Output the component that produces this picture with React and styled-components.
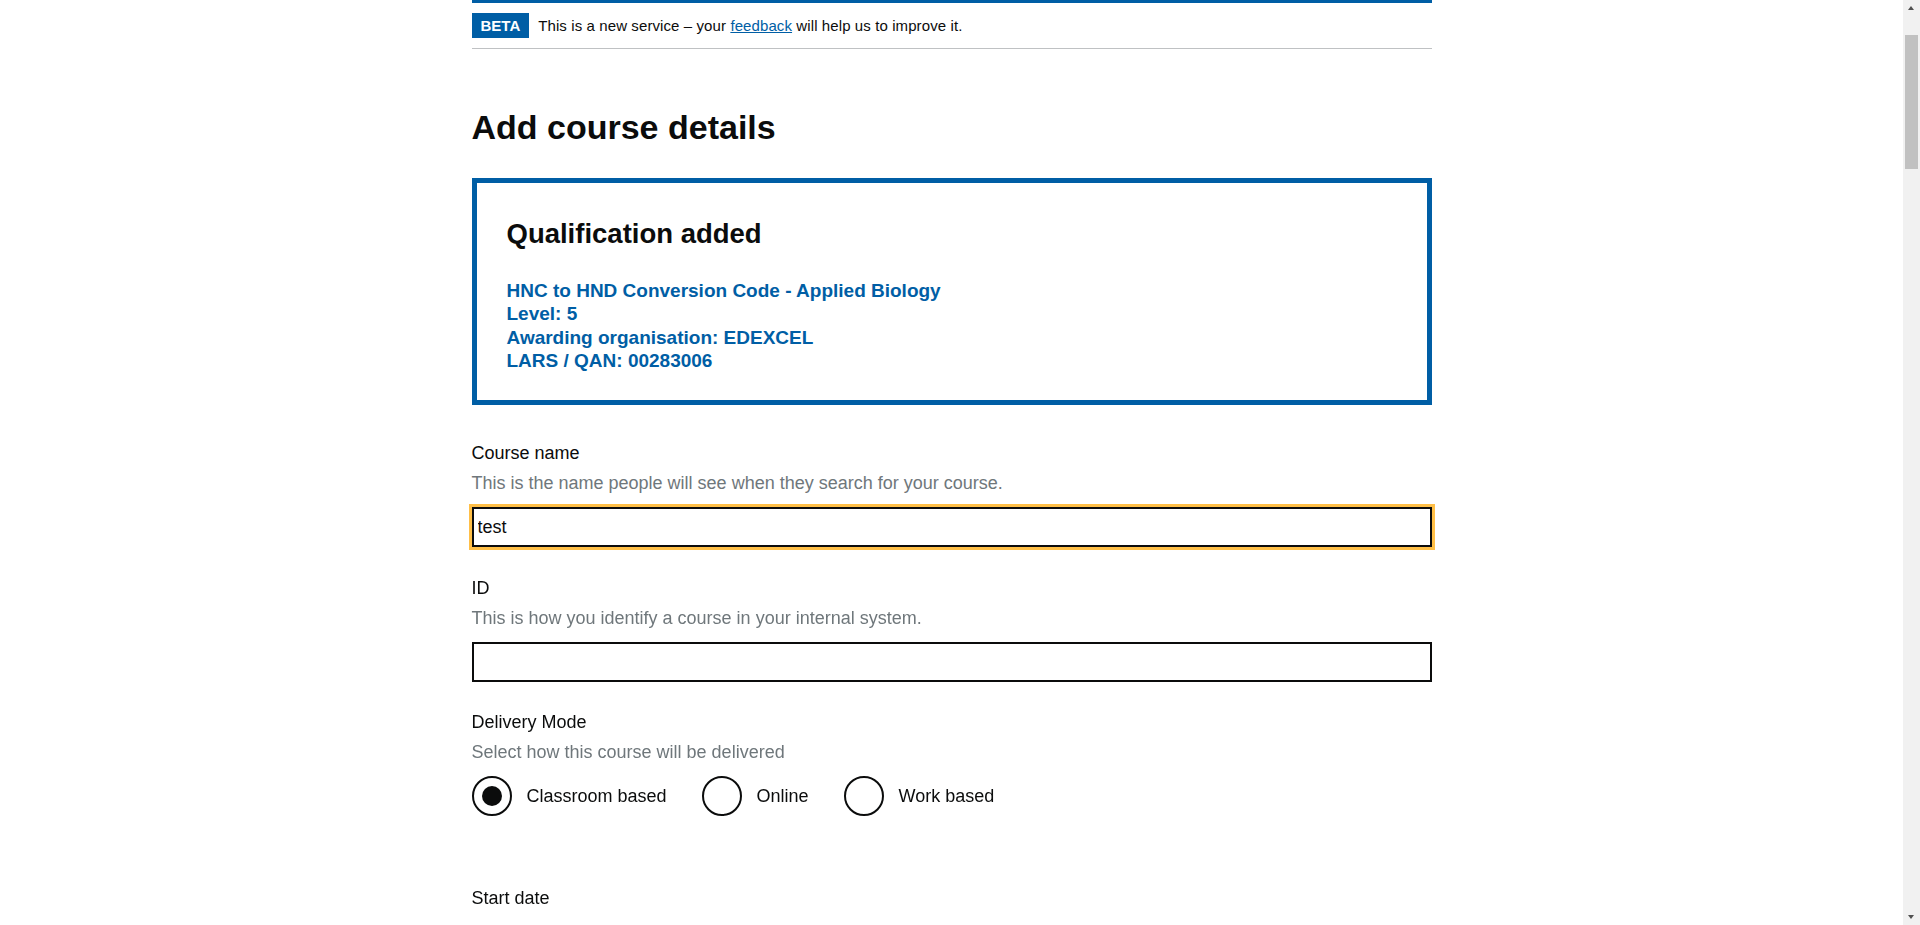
import React, { useEffect, useRef } from 'react'
import styled, { createGlobalStyle } from 'styled-components'

const GlobalStyle = createGlobalStyle`
  html, body {
    margin: 0;
    padding: 0;
    background: #fff;
  }
  body {
    font-family: "Liberation Sans", Arial, sans-serif;
    color: #0b0c0c;
    padding-right: 17px;
  }
  * { box-sizing: border-box; }
`;

const Page = styled.div`
  width: 960px;
  margin: 0 auto;
  min-height: 6150px;
`;

const ScrollTrack = styled.div`
  position: fixed;
  top: 0;
  right: 0;
  width: 17px;
  height: 100vh;
  background: #f1f1f1;
`;

const ScrollThumb = styled.div`
  position: absolute;
  top: 35px;
  left: 2px;
  width: 13px;
  height: 134px;
  background: #c1c1c1;
`;

const ScrollArrow = styled.div`
  position: absolute;
  left: 5px;
  width: 0;
  height: 0;
  border-left: 3.5px solid transparent;
  border-right: 3.5px solid transparent;
  ${p => (p.$down
    ? 'bottom: 6px; border-top: 4px solid #505050;'
    : 'top: 6px; border-bottom: 4px solid #505050;')}
`;

const PhaseBanner = styled.div`
  border-top: 3px solid #005ea5;
  border-bottom: 1px solid #bfc1c3;
  padding: 10px 0;
  display: flex;
  align-items: center;
  font-size: 15px;
  line-height: 25px;
  letter-spacing: 0.1px;
`;

const Tag = styled.strong`
  display: inline-block;
  background: #005ea5;
  color: #fff;
  font-size: 15px;
  font-weight: 700;
  line-height: 25px;
  padding: 0 9px;
  margin-right: 9px;
  letter-spacing: 0;
`;

const BannerLink = styled.a`
  color: #005ea5;
  text-decoration: underline;
`;

const Main = styled.main`
  padding-top: 58px;
`;

const Heading = styled.h1`
  font-size: 34px;
  font-weight: 700;
  line-height: 40px;
  margin: 0 0 31px;
`;

const Panel = styled.div`
  border: 5px solid #005ea5;
  padding: 35px 30px 28px;
  margin-bottom: 38px;
`;

const PanelTitle = styled.h2`
  font-size: 27.5px;
  font-weight: 700;
  line-height: 32px;
  margin: 0 0 29px;
`;

const PanelLine = styled.p`
  margin: 0;
  color: #005ea5;
  font-size: 19px;
  font-weight: 700;
  line-height: 23.3px;
`;

const FormGroup = styled.div`
  margin-bottom: ${p => p.$gap || 31}px;
`;

const Label = styled.label`
  display: block;
  font-size: 18px;
  line-height: 20px;
  margin-bottom: 10px;
`;

const Hint = styled.span`
  display: block;
  font-size: 18px;
  line-height: 20px;
  color: #6f777b;
  margin-bottom: 14px;
`;

const TextInput = styled.input`
  display: block;
  width: 100%;
  height: 40px;
  padding: 5px 4px;
  border: 2px solid #0b0c0c;
  border-radius: 0;
  font-family: inherit;
  font-size: 18px;
  color: #0b0c0c;
  outline: ${p => (p.$focused ? '3px solid #ffbf47' : 'none')};
  outline-offset: 0;
  &:focus {
    outline: 3px solid #ffbf47;
  }
`;

const RadioRow = styled.div`
  display: flex;
  align-items: center;
`;

const RadioItem = styled.label`
  display: flex;
  align-items: center;
  margin-right: 35px;
  font-size: 18px;
  line-height: 20px;
  cursor: pointer;
`;

const RadioCircle = styled.span`
  width: 40px;
  height: 40px;
  border: 2px solid #0b0c0c;
  border-radius: 50%;
  display: flex;
  align-items: center;
  justify-content: center;
  margin-right: 15px;
  &::after {
    content: '';
    width: 20px;
    height: 20px;
    border-radius: 50%;
    background: #0b0c0c;
    display: ${p => (p.$checked ? 'block' : 'none')};
  }
`;

const modes = ['Classroom based', 'Online', 'Work based'];

function App() {
  const nameRef = useRef(null);

  useEffect(() => {
    const el = nameRef.current;
    if (el) {
      el.focus();
      el.setSelectionRange(4, 4);
    }
  }, []);

  return (
    <Page>
      <GlobalStyle />
      <PhaseBanner>
        <Tag>BETA</Tag>
        <span>
          This is a new service – your <BannerLink href="#">feedback</BannerLink> will help us to improve it.
        </span>
      </PhaseBanner>

      <Main>
        <Heading>Add course details</Heading>

        <Panel>
          <PanelTitle>Qualification added</PanelTitle>
          <PanelLine>HNC to HND Conversion Code - Applied Biology</PanelLine>
          <PanelLine>Level: 5</PanelLine>
          <PanelLine>Awarding organisation: EDEXCEL</PanelLine>
          <PanelLine>LARS / QAN: 00283006</PanelLine>
        </Panel>

        <FormGroup $gap={31}>
          <Label htmlFor="course-name">Course name</Label>
          <Hint>This is the name people will see when they search for your course.</Hint>
          <TextInput id="course-name" ref={nameRef} defaultValue="test" $focused />
        </FormGroup>

        <FormGroup $gap={30}>
          <Label htmlFor="course-id">ID</Label>
          <Hint>This is how you identify a course in your internal system.</Hint>
          <TextInput id="course-id" />
        </FormGroup>

        <FormGroup $gap={72}>
          <Label as="span">Delivery Mode</Label>
          <Hint>Select how this course will be delivered</Hint>
          <RadioRow>
            {modes.map((m, i) => (
              <RadioItem key={m}>
                <RadioCircle $checked={i === 0} />
                {m}
              </RadioItem>
            ))}
          </RadioRow>
        </FormGroup>

        <FormGroup>
          <Label as="span">Start date</Label>
        </FormGroup>
      </Main>

      <ScrollTrack>
        <ScrollArrow />
        <ScrollThumb />
        <ScrollArrow $down />
      </ScrollTrack>
    </Page>
  )
}

export default App
